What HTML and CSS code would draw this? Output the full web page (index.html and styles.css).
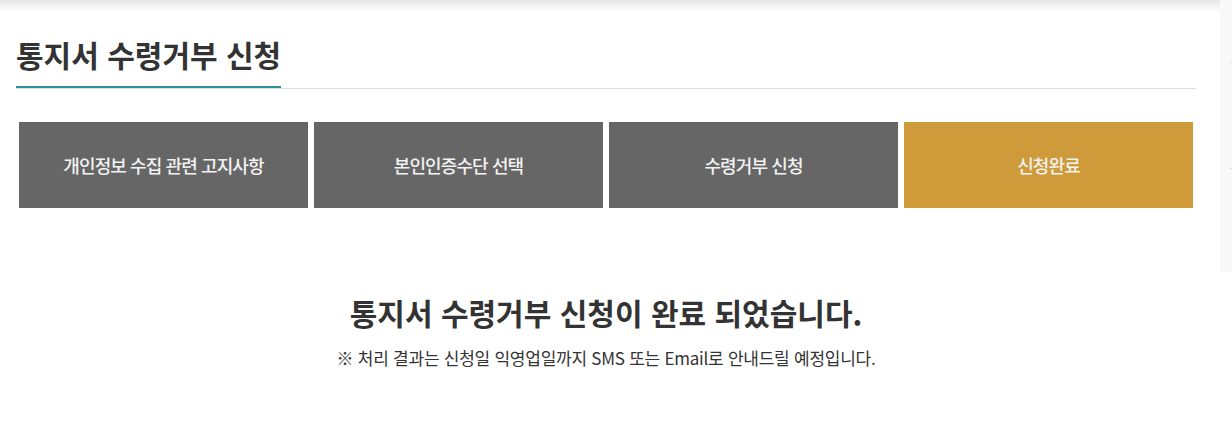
FILE: index.html
```html
<!DOCTYPE html>
<html lang="ko">
<head>
    <meta charset="UTF-8">
    <meta name="viewport" content="width=device-width, initial-scale=1.0">
    <title>통지서 수령거부 신청</title>
    <link rel="stylesheet" href="styles.css">
</head>
<body>
    <div class="page">
        <div class="main">
            <div class="top-shade"></div>

            <div class="content">
                <div class="page-title">
                    <h2>통지서 수령거부 신청</h2>
                </div>

                <!-- 진행 단계 -->
                <ul class="steps">
                    <li>개인정보 수집 관련 고지사항</li>
                    <li>본인인증수단 선택</li>
                    <li>수령거부 신청</li>
                    <li class="on">신청완료</li>
                </ul>

                <div class="complete">
                    <h3>통지서 수령거부 신청이 완료 되었습니다.</h3>
                    <p>※ 처리 결과는 신청일 익영업일까지 SMS 또는 Email로 안내드릴 예정입니다.</p>
                </div>
            </div>
        </div>

        <div class="side">
            <span class="mark"></span>
            <span class="mark"></span>
        </div>
    </div>
</body>
</html>
```

FILE: styles.css
```css
* {
    margin: 0;
    padding: 0;
    box-sizing: border-box;
}

body, html {
    height: 100%;
    background: #fff;
    font-family: "Noto Sans CJK KR", "Noto Sans", sans-serif;
    color: #333;
}

.page {
    display: flex;
    align-items: flex-start;
}

.main {
    width: 1220px;
}

.top-shade {
    height: 12px;
    background: linear-gradient(#e6e6e6, #fff);
}

.content {
    padding: 0 24px 0 16px;
}

/* 페이지 제목 */
.page-title {
    display: flex;
    margin-top: 20px;
    border-bottom: 1px solid #ddd;
}

.page-title h2 {
    font-size: 30px;
    font-weight: bold;
    line-height: 44px;
    padding-bottom: 10px;
    border-bottom: 2px solid #2a9299;
    color: #333;
}

/* 단계 탭 */
.steps {
    list-style: none;
    display: flex;
    margin-top: 33px;
}

.steps li {
    flex: 1;
    margin: 0 3px;
    height: 86px;
    display: flex;
    justify-content: center;
    align-items: center;
    background: #666;
    color: #f2f2f2;
    font-size: 18px;
    font-weight: 500;
    letter-spacing: -0.9px;
}

.steps li.on {
    background: #cf9a3a;
}

/* 완료 메시지 */
.complete {
    text-align: center;
    padding-top: 84px;
}

.complete h3 {
    font-size: 30px;
    font-weight: bold;
    line-height: 40px;
}

.complete p {
    margin-top: 14px;
    font-size: 17px;
    line-height: 24px;
    letter-spacing: -0.25px;
}

.side {
    width: 12px;
    height: 272px;
    background: #f8f8f8;
    display: flex;
    flex-direction: column;
    align-items: flex-end;
    padding-top: 62px;
    gap: 105px;
}

.side .mark {
    width: 2px;
    height: 1px;
    background: #ddd;
}
```
